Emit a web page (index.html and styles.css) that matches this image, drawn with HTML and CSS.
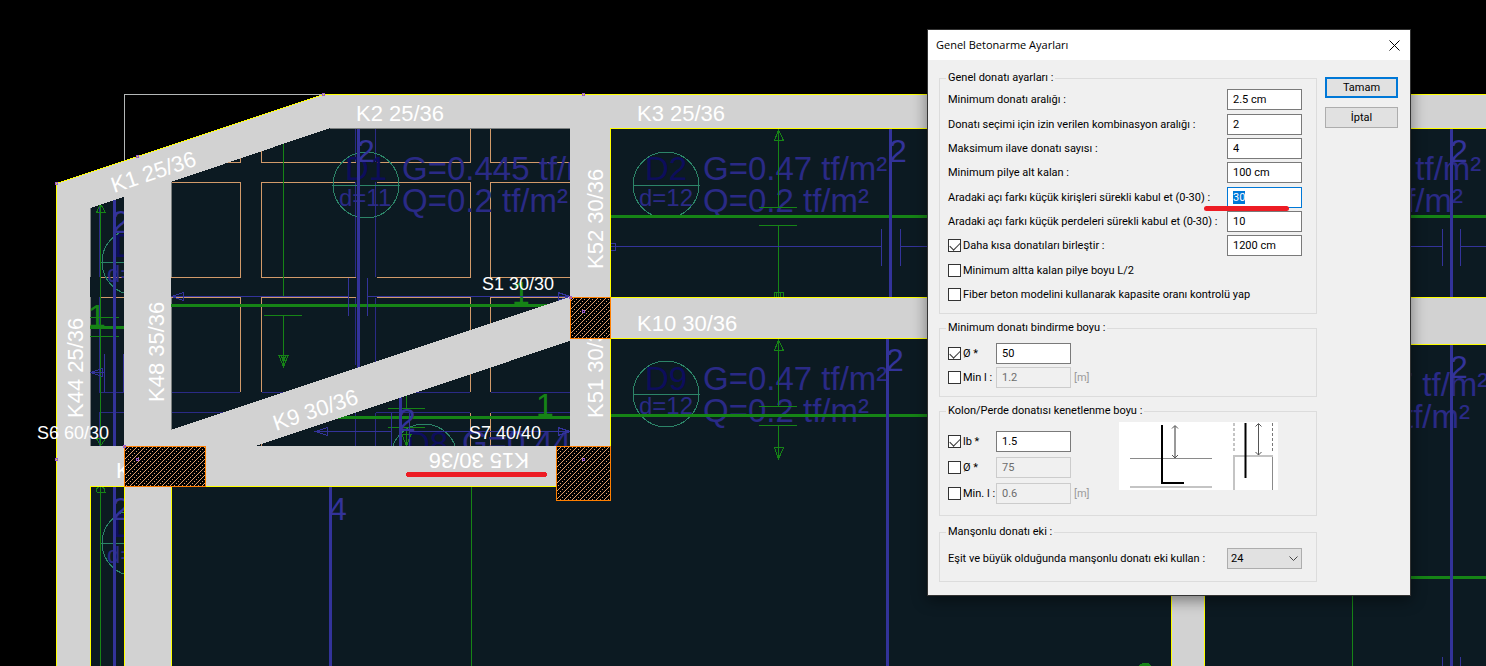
FILE: index.html
```html
<!DOCTYPE html>
<html lang="tr">
<head>
<meta charset="utf-8">
<title>Genel Betonarme Ayarları</title>
<link rel="stylesheet" href="styles.css">
</head>
<body>
<main class="workspace">
<svg class="plan" viewBox="0 0 1486 666" preserveAspectRatio="xMinYMin slice" role="img" aria-label="Kalıp planı">
  <defs>
    <pattern id="hatch" width="8" height="8" patternUnits="userSpaceOnUse">
      <rect class="hatch-base" width="8" height="8"/>
      <path class="hatch-dot" d="M0 7h1v1h-1zM1 6h1v1h-1zM2 5h1v1h-1zM3 4h1v1h-1zM4 3h1v1h-1zM5 2h1v1h-1zM6 1h1v1h-1zM7 0h1v1h-1zM0 3h1v1h-1zM2 1h1v1h-1zM4 7h1v1h-1zM6 5h1v1h-1z"/>
    </pattern>
  </defs>

  <path class="slab" d="M57 184L323 95H1486V666H57Z"/>
  <path class="axis" d="M124.500 162V94.500H323"/>

  <!-- ribs -->
  <path class="rib" d="M228 162.500H240.500V158M261.500 150V162.500H356M377 162.500H470.500V129M490.500 129V162.500H570
    M171 182.500H240.500V277.500H171M356 182.500H261.500V277.500H356M377 182.500H470.500V277.500H377M570 182.500H490.500V277.500H570
    M100 277.500H124M100 297.500H124M171 297.500H240.500V392M356 297.500H261.500V392M377 297.500H470.500V392M570 297.500H490.500V392M470.500 413V446M490.500 413V446M261.500 440V446"/>
  <path class="thin-dim" d="M171 392.500H240M262 392.500H300M410 392.500H470M491 392.500H570M171 412.500H224M376 412.500H470M491 412.500H570
    M355.500 129V162M355.500 182V277M355.500 298V365M375.500 129V162M375.500 182V277M375.500 298V365M355.500 413V446M375.500 413V446
    M99.500 205V277M99.500 297V392.500H124M124 412.500H99.500V446"/>
  <path class="edge" d="M330 128.500H570M90.500 207V277M90.500 297V446M171.500 182V277M171.500 298V430"/>

  <!-- slab labels -->
  <g class="slab-text">
    <text class="slab-name" x="345" y="180">D1</text><text class="slab-thick" x="339" y="206">d=11</text>
    <text x="402" y="180">G=0.445 tf/m²</text><text x="402" y="212">Q=0.2 tf/m²</text>
    <text class="slab-name" x="645" y="180">D2</text><text class="slab-thick" x="639" y="206">d=12</text>
    <text x="703" y="180">G=0.47 tf/m²</text><text x="703" y="212">Q=0.2 tf/m²</text>
    <text class="slab-name" x="645" y="390">D9</text><text class="slab-thick" x="639" y="414">d=12</text>
    <text x="703" y="390">G=0.47 tf/m²</text><text x="703" y="422">Q=0.2 tf/m²</text>
    <text class="slab-name" x="406" y="455">D8</text><text x="462" y="454">G=0.44</text>
    <text class="slab-name" x="114" y="257">D</text><text class="slab-thick" x="107" y="282">d=</text>
    <text class="slab-name" x="113" y="537">D</text><text class="slab-thick" x="107" y="563">d=</text>
    <text x="1297" y="180">G=0.47 tf/m²</text><text x="1297" y="212">Q=0.2 tf/m²</text>
    <text x="1304" y="396">G=0.47 tf/m²</text><text x="1304" y="428">Q=0.2 tf/m²</text>
  </g>
  <g class="tag">
    <circle cx="366" cy="185" r="33"/><path d="M332 185.500H400"/>
    <circle cx="666" cy="185" r="33"/><path d="M633 185.500H700"/>
    <circle cx="666" cy="394" r="33"/><path d="M633 394.500H700"/>
    <path d="M391 457A33 33 0 0 1 457 457"/>
    <circle cx="135" cy="262" r="33"/><path d="M101 262.500H130"/>
    <circle cx="135" cy="543" r="33"/><path d="M101 543.500H130"/>
  </g>

  <!-- reinforcement: short direction -->
  <path class="green-bar" d="M171 305.500H560M320 417.500H570M611 216.500H1486M611 415.500H930M90 327.500H124M1400 577.500H1486M1140 667Q1145 661 1151 667"/>
  <path class="green" d="M283.500 140V296M264 315.500H302M283.500 315V367M279 355.500H288L283.500 367ZM281.500 356L283.500 362L285.500 356
    M100.500 204V446M100.500 204L96.500 212.500H105.500ZM90 317.500H119M90 336.500H119M96.500 438.500H105.500L100.500 446Z
    M388 408.500H425M388 427.500H425M406.500 395V408M406.500 427V446M402 434.500H411L406.500 446Z
    M778.500 129V207M759 207.500H797M759 225.500H797M778.500 225V297M778.500 130L774.500 140.500H783.500ZM774.500 297V292.500H783.500V297M776.500 297V293M780.500 297V293
    M778.500 339V406M759 406.500H797M759 425.500H797M778.500 425V460M778.500 340L774.500 350.500H783.500ZM774.500 447.500H783.500L778.500 459Z
    M100.500 487V666M96.500 492.500H105.500M96.500 492V489L98.500 487M104.500 492V489L102.500 487M471.500 487V666M1352.500 590V666"/>
  <g class="green-text"><text x="512" y="304">1</text><text x="536" y="416">1</text><text x="88" y="327">1</text></g>

  <!-- reinforcement: long direction -->
  <path class="blue-bar" d="M358.500 129V370M400.500 395V446M114.500 198V446M114.500 487V666M330.500 487V666M890.500 129V297M887.500 339V666M1451.500 129V297M1451.500 345V666"/>
  <path class="blue" d="M171 296.500H348M348.500 278V316M367.500 278V316M367 296.500H570M172 296.500L183.500 292.500V300.500ZM570 296.500L558 292.500V300.500Z
    M316 431.500H391M391.500 413V446M409.500 413V446M409 431.500H570M316 431.500L327.500 427.500V435.500ZM570 431.500L558 427.500V435.500Z
    M104.500 354V392M123.500 354V392M91 372.500H104M91 372.500L102.500 368.500V376.500Z
    M611 246.500H881M881.500 229V266M900.500 229V266M900 246.500H930M611 243.500H615.500V250.500H611
    M1400 246.500H1442M1442.500 229V266M1460.500 229V266M1460 246.500H1486M1442.500 657V666M1460.500 657V666"/>
  <g class="blue-text"><text x="357" y="162">2</text><text x="398" y="431">2</text><text x="112" y="233">2</text><text x="112" y="520">2</text><text x="329" y="520">4</text><text x="889" y="162">2</text><text x="886" y="371">2</text><text x="1450" y="162">2</text><text x="1450" y="378">2</text></g>

  <!-- beams -->
  <path class="beam" d="M57 184L323 95H1486V128H610V297H1486V344H1204V338H610V446H556V486H171V666H124V486H90V666H57ZM90 208V446H124V197ZM171 182V430L570 297V128H330ZM255 446H570V341Z"/>
  <path class="beam" d="M1171 590H1204V666H1171Z"/>
  <path class="outline" d="M56.500 666V183.500L323.500 94.500H1486M930 128.500H610.500V297.500H930M930 338.500H610.500V446M90.500 666V486.500H124.500V666M171.500 666V486.500H556M1400 128.500H1486M1400 297.500H1486M1400 344.500H1486M1171.500 590V666M1204.500 590V666"/>

  <g class="beam-text">
    <text transform="translate(114 193) rotate(-18.400)">K1 25/36</text>
    <text x="356" y="121">K2 25/36</text><text x="637" y="121">K3 25/36</text><text x="637" y="331">K10 30/36</text>
    <text transform="translate(276 431) rotate(-18.400)">K9 30/36</text>
    <text transform="translate(603 269) rotate(-90)">K52 30/36</text>
    <text transform="translate(603 418) rotate(-90)">K51 30/36</text>
    <text transform="translate(83 418) rotate(-90)">K44 25/36</text>
    <text transform="translate(164 402) rotate(-90)">K48 35/36</text>
    <text transform="translate(529 453) rotate(180)">K15 30/36</text>
    <text x="116" y="478">K</text>
  </g>

  <!-- columns -->
  <g class="column"><rect x="124.500" y="446.500" width="81" height="40"/><rect x="570.500" y="297.500" width="40" height="41"/><rect x="556.500" y="446.500" width="54" height="54"/></g>
  <g class="column-text"><text x="482" y="290">S1 30/30</text><text x="469" y="439">S7 40/40</text><text x="37" y="439">S6 60/30</text></g>
  <path class="node" d="M55.500 182.500h2v2h-2zM136.500 155.500h2v2h-2zM322.500 93.500h2v2h-2zM582.500 93.500h2v2h-2zM123.500 445.500h2v2h-2zM136.500 458.500h2v2h-2zM55.500 458.500h2v2h-2zM569.500 296.500h2v2h-2zM582.500 310.500h2v2h-2zM582.500 458.500h2v2h-2z"/>
  <path class="marker" d="M408.500 474.500H544.500"/>
</svg>

<section class="dialog" role="dialog" aria-labelledby="dialog-title">
  <header class="titlebar">
    <h1 class="title" id="dialog-title">Genel Betonarme Ayarları</h1>
    <button class="close" type="button" aria-label="Kapat"><svg width="11" height="11" viewBox="0 0 11 11"><path d="M.5 .5L10.500 10.500M10.500 .5L.5 10.500" stroke="#000" fill="none"/></svg></button>
  </header>
  <form class="body">
    <div class="groups">
      <fieldset class="group general">
        <legend>Genel donatı ayarları :</legend>
        <div class="row"><label for="spacing">Minimum donatı aralığı :</label><input class="field" id="spacing" type="text" value="2.5 cm"></div>
        <div class="row"><label for="combo">Donatı seçimi için izin verilen kombinasyon aralığı :</label><input class="field" id="combo" type="text" value="2"></div>
        <div class="row"><label for="extra">Maksimum ilave donatı sayısı :</label><input class="field" id="extra" type="text" value="4"></div>
        <div class="row"><label for="pilye">Minimum pilye alt kalan :</label><input class="field" id="pilye" type="text" value="100 cm"></div>
        <div class="row marked"><label for="beam-angle">Aradaki açı farkı küçük kirişleri sürekli kabul et (0-30) :</label><input class="field active" id="beam-angle" type="text" value="30" autofocus></div>
        <div class="row"><label for="wall-angle">Aradaki açı farkı küçük perdeleri sürekli kabul et (0-30) :</label><input class="field" id="wall-angle" type="text" value="10"></div>
        <div class="row"><label class="check"><input type="checkbox" checked>Daha kısa donatıları birleştir :</label><input class="field" type="text" value="1200 cm" aria-label="Daha kısa donatıları birleştir"></div>
        <div class="row"><label class="check"><input type="checkbox">Minimum altta kalan pilye boyu L/2</label></div>
        <div class="row"><label class="check"><input type="checkbox">Fiber beton modelini kullanarak kapasite oranı kontrolü yap</label></div>
      </fieldset>

      <fieldset class="group lap">
        <legend>Minimum donatı bindirme boyu :</legend>
        <div class="line"><label class="check"><input type="checkbox" checked>Ø *</label><input class="field" type="text" value="50" aria-label="Ø çarpanı"></div>
        <div class="line"><label class="check"><input type="checkbox">Min l :</label><input class="field" type="text" value="1.2" aria-label="Min l" disabled><span class="unit">[m]</span></div>
      </fieldset>

      <fieldset class="group anchor">
        <legend>Kolon/Perde donatısı kenetlenme boyu :</legend>
        <div class="anchor-content">
          <div class="anchor-rows">
            <div class="line"><label class="check"><input type="checkbox" checked>lb *</label><input class="field" type="text" value="1.5" aria-label="lb çarpanı"></div>
            <div class="line"><label class="check"><input type="checkbox">Ø *</label><input class="field" type="text" value="75" aria-label="Ø çarpanı" disabled></div>
            <div class="line"><label class="check"><input type="checkbox">Min. l :</label><input class="field" type="text" value="0.6" aria-label="Min. l" disabled><span class="unit">[m]</span></div>
          </div>
          <svg class="diagram" width="159" height="68" viewBox="0 0 159 68" role="img" aria-label="Kenetlenme boyu şeması">
            <rect width="159" height="68" fill="#fff"/>
            <path d="M11 36.500H93M153.500 33V68" stroke="#8a8a8a" fill="none"/>
            <path d="M11 65H93M115 34H154M115 33V68" stroke="#c4c4c4" stroke-width="2" fill="none"/>
            <path d="M43 3V61H65" stroke="#000" stroke-width="2" fill="none"/>
            <path d="M126.500 1V56" stroke="#000" stroke-width="2" fill="none"/>
            <path d="M56 4V35" stroke="#999" stroke-width="2"/>
            <path d="M53 6.500L56 3.500L59 6.500M53 33L56 36L59 33M139.500 2V33M136.500 4.500L139.500 1.500L142.500 4.500M136.500 30L139.500 33L142.500 30" stroke="#555" fill="none"/>
            <path d="M115 1V31" stroke="#c4c4c4" stroke-width="2" stroke-dasharray="3 2"/>
            <path d="M153.500 1V31" stroke="#777" stroke-dasharray="3 2"/>
          </svg>
        </div>
      </fieldset>

      <fieldset class="group coupler">
        <legend>Manşonlu donatı eki :</legend>
        <div class="row"><label for="coupler">Eşit ve büyük olduğunda manşonlu donatı eki kullan :</label>
          <span class="select-wrap"><select id="coupler"><option>24</option></select><svg class="chevron" width="9" height="6" viewBox="0 0 9 6"><path d="M.5 .5L4.500 4.500L8.500 .5" stroke="#444" fill="none"/></svg></span></div>
      </fieldset>
    </div>
    <div class="actions">
      <button class="button primary" type="submit">Tamam</button>
      <button class="button" type="button">İptal</button>
    </div>
  </form>
</section>
</main>
<script>
  const angle = document.getElementById("beam-angle");
  angle.focus();
  angle.select();
</script>
</body>
</html>
```
FILE: styles.css
```css
* { box-sizing: border-box; }

body {
  margin: 0;
  background: #000;
  font: 11px/14px Roboto, "Liberation Sans", sans-serif;
  color: #000;
}

.workspace {
  position: relative;
  height: 100vh;
  min-height: 600px;
  overflow: hidden;
}

/* plan drawing */
.plan {
  display: block;
  width: 100%;
  height: 100%;
  font-family: "Liberation Sans", Arial, sans-serif;
  shape-rendering: crispEdges;
}
.plan path { fill: none; }
.plan .slab { fill: #0c1a22; }
.plan .beam { fill: #d2d2d2; fill-rule: evenodd; }
.hatch-base { fill: #000; stroke: none; }
.plan .hatch-dot { fill: #e0a070; stroke: none; }
.axis { stroke: #b4b8b8; }
.rib { stroke: #d29a6a; }
.edge { stroke: #7c8080; }
.thin-dim { stroke: #2a2a86; }
.outline { stroke: #ffff00; }
.green { stroke: #168416; }
.green-bar { stroke: #168416; stroke-width: 3; }
.blue { stroke: #33339a; }
.blue-bar { stroke: #33339a; stroke-width: 3; }
.tag { fill: none; stroke: #2c8468; }
.column { fill: url(#hatch); stroke: #ff7f00; }
.node { stroke: #9a5cd0; }
.marker { stroke: #ed1c24; stroke-width: 5; stroke-linecap: round; }
.slab-text { fill: #2a2a86; font-size: 33px; }
.slab-name { fill: #0d0d5c; }
.slab-thick { font-size: 24px; }
.green-text { fill: #168416; font-size: 32px; }
.blue-text { fill: #33339a; font-size: 32px; }
.beam-text { fill: #fff; font-size: 22px; }
.column-text { fill: #fff; font-size: 18px; }

/* dialog */
.dialog {
  position: absolute;
  top: 29px;
  right: 75px;
  width: 484px;
  border: 1px solid #333;
  background: #f0f0f0;
  box-shadow: 0 4px 14px rgba(0, 0, 0, .45);
}
.titlebar {
  display: flex;
  align-items: center;
  justify-content: space-between;
  height: 30px;
  padding: 0 10px 0 8px;
  background: #fff;
}
.title {
  margin: 0;
  font: 11px/14px "Open Sans", "Noto Sans", sans-serif;
}
.close {
  display: flex;
  padding: 0;
  border: 0;
  background: none;
}
.body {
  display: flex;
  gap: 8px;
  padding: 11px 12px 13px 11px;
}
.groups { flex: 1; }
.group {
  min-width: 0;
  margin: 0 0 7px;
  padding: 4px 14px 8px 8px;
  border: 1px solid #dcdcdc;
}
.group legend {
  margin-left: -2px;
  padding: 0 2px;
  line-height: 14px;
}
.row {
  display: flex;
  align-items: center;
  justify-content: space-between;
  height: 21px;
  white-space: nowrap;
}
.general .row + .row { margin-top: 3px; }
.general .row:nth-of-type(3n + 2) { margin-top: 4px; }
.marked { position: relative; }
.marked::after {
  content: "";
  position: absolute;
  right: 13px;
  bottom: -3px;
  width: 85px;
  height: 5px;
  border-radius: 3px;
  background: #ed1c24;
}
.field {
  width: 75px;
  height: 21px;
  padding: 0 5px;
  border: 1px solid #7a7a7a;
  border-radius: 0;
  background: #fff;
  color: #000;
  font: inherit;
  outline: 0;
}
.field.active { border-color: #0078d7; }
.field::selection { background: #0078d7; color: #fff; }
.field:disabled {
  border-color: #cccccc;
  background: #f0f0f0;
  color: #6d6d6d;
}
.check {
  display: flex;
  align-items: center;
  gap: 2px;
  white-space: nowrap;
}
.check input {
  appearance: none;
  display: grid;
  place-items: center;
  width: 13px;
  height: 13px;
  margin: 0;
  border: 1px solid #333;
  background: #fff;
}
.check input:checked::before {
  content: "";
  width: 9px;
  height: 5px;
  margin-top: -2px;
  border: solid #333;
  border-width: 0 0 1px 1px;
  transform: rotate(-45deg);
}
.line {
  display: flex;
  align-items: center;
  height: 21px;
}
.line .check { width: 48px; }
.line .unit { margin-left: 3px; color: #9a9a9a; }
.lap { padding-top: 8px; }
.lap .line + .line { margin-top: 3px; }
.anchor {
  margin-bottom: 9px;
  padding-bottom: 11px;
}
.anchor-content {
  display: flex;
  align-items: flex-start;
  justify-content: space-between;
  padding-right: 24px;
}
.anchor-rows {
  display: grid;
  gap: 5px;
  padding-top: 9px;
}
.coupler {
  margin-bottom: 0;
  padding-top: 9px;
  padding-bottom: 12px;
}
.select-wrap { position: relative; }
.select-wrap select {
  appearance: none;
  display: block;
  width: 75px;
  height: 21px;
  padding: 0 3px;
  border: 1px solid #adadad;
  border-radius: 0;
  background: #e1e1e1;
  color: #000;
  font: inherit;
}
.chevron {
  position: absolute;
  top: 8px;
  right: 4px;
  pointer-events: none;
}
.actions {
  display: flex;
  flex-direction: column;
  gap: 9px;
  padding-top: 6px;
}
.button {
  width: 73px;
  height: 21px;
  padding: 0;
  border: 1px solid #adadad;
  background: #e1e1e1;
  color: #000;
  font: inherit;
}
.button.primary { border: 2px solid #0078d7; }
```
